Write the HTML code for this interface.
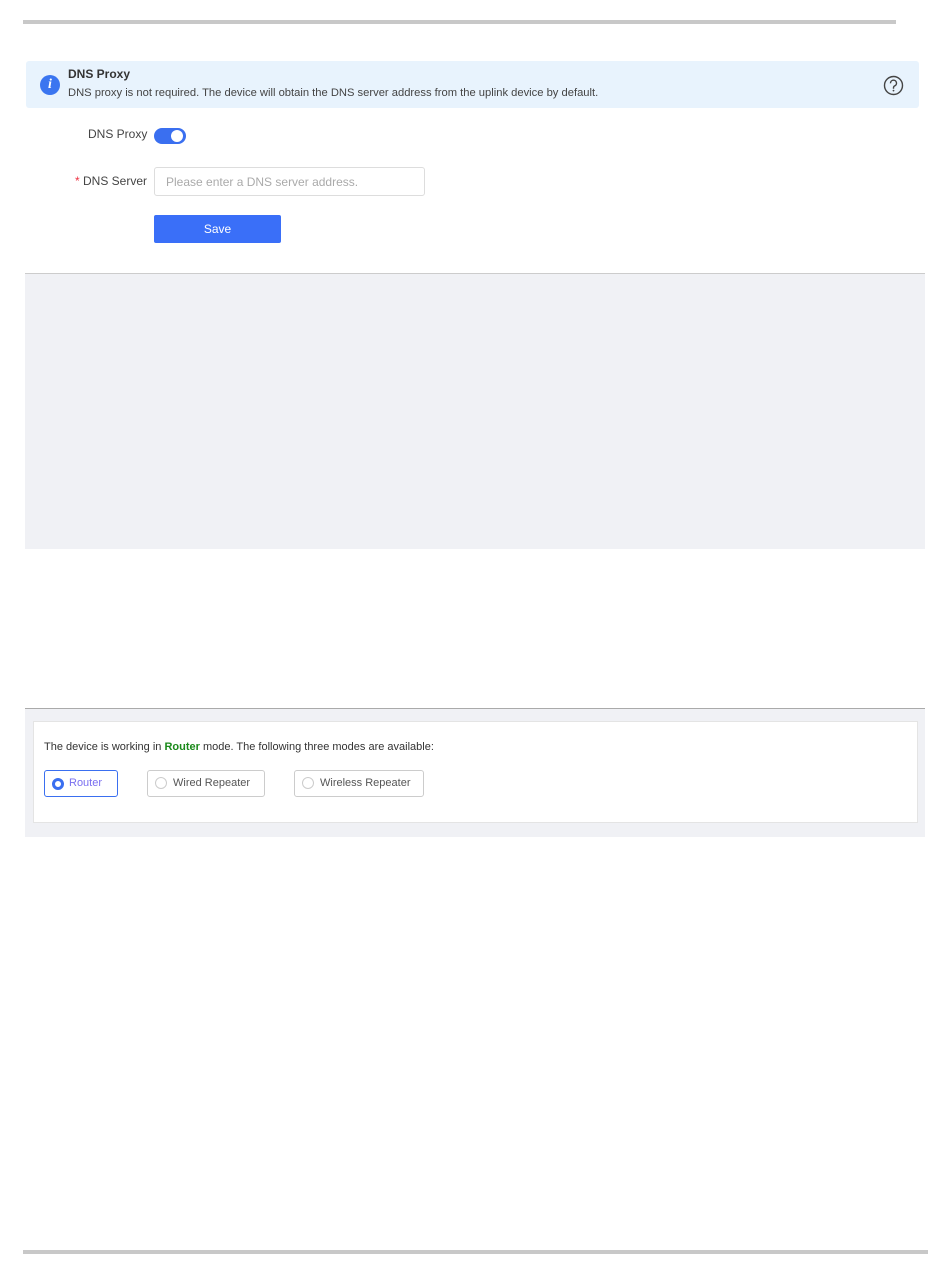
<!DOCTYPE html>
<html><head><style>
body{margin:0;width:950px;height:1276px;background:#fff;position:relative;font-family:"Liberation Sans",sans-serif;overflow:hidden}
.a{position:absolute}
</style></head><body>
<div class="a" style="left:23px;top:20px;width:873px;height:4px;background:#c8c8c8"></div>
<div class="a" style="left:26px;top:61px;width:893px;height:47px;background:#e8f3fd;border-radius:3px"></div>
<div class="a" style="left:40px;top:75px;width:20px;height:20px;border-radius:50%;background:#3a75f0;color:#fff;font:italic bold 14px 'Liberation Serif',serif;text-align:center;line-height:20px">i</div>
<div class="a" style="left:68px;top:67px;font-size:12px;font-weight:bold;color:#333">DNS Proxy</div>
<div class="a" style="left:68px;top:87px;font-size:11.2px;color:#444">DNS proxy is not required. The device will obtain the DNS server address from the uplink device by default.</div>
<svg class="a" style="left:883px;top:75px" width="21" height="21" viewBox="0 0 21 21"><circle cx="10.5" cy="10.5" r="9" fill="none" stroke="#444" stroke-width="1.4"/><path d="M7.5 8.3a3 3 0 1 1 4.2 2.6c-.9.4-1.2 1-1.2 2v.8" fill="none" stroke="#444" stroke-width="1.4"/><circle cx="10.5" cy="15.6" r=".9" fill="#444"/></svg>
<div class="a" style="left:88px;top:127px;font-size:12px;color:#444">DNS Proxy</div>
<div class="a" style="left:154px;top:128px;width:32px;height:16px;border-radius:8px;background:#3a6ff0"></div>
<div class="a" style="left:171px;top:130px;width:12px;height:12px;border-radius:50%;background:#fff"></div>
<div class="a" style="left:75px;top:174px;font-size:12px;color:#444"><span style="color:#e34">*</span> DNS Server</div>
<div class="a" style="left:154px;top:167px;width:269px;height:27px;border:1px solid #ddd;border-radius:3px"></div>
<div class="a" style="left:166px;top:175px;font-size:12px;color:#aaa">Please enter a DNS server address.</div>
<div class="a" style="left:154px;top:215px;width:127px;height:28px;background:#3a6ff8;border-radius:2px;color:#fff;font-size:12px;text-align:center;line-height:28px">Save</div>
<div class="a" style="left:25px;top:273px;width:900px;height:275px;background:#f0f1f5;border-top:1px solid #ccc"></div>
<div class="a" style="left:25px;top:708px;width:900px;height:128px;background:#f0f1f5;border-top:1px solid #aaa"></div>
<div class="a" style="left:33px;top:721px;width:883px;height:100px;background:#fff;border:1px solid #e4e4e4"></div>
<div class="a" style="left:44px;top:741px;font-size:11px;color:#333">The device is working in <b style="color:#1a8a1a">Router</b> mode. The following three modes are available:</div>
<div class="a" style="left:44px;top:770px;width:72px;height:25px;border:1px solid #3a6ff0;border-radius:3px"></div>
<div class="a" style="left:52px;top:778px;width:6px;height:6px;border-radius:50%;background:#fff;border:3px solid #3a6ff0"></div>
<div class="a" style="left:69px;top:777px;font-size:11px;color:#7a6ff0">Router</div>
<div class="a" style="left:147px;top:770px;width:116px;height:25px;border:1px solid #ccc;border-radius:3px"></div>
<div class="a" style="left:155px;top:777px;width:10px;height:10px;border-radius:50%;border:1px solid #ccc"></div>
<div class="a" style="left:173px;top:777px;font-size:11px;color:#555">Wired Repeater</div>
<div class="a" style="left:294px;top:770px;width:128px;height:25px;border:1px solid #ccc;border-radius:3px"></div>
<div class="a" style="left:302px;top:777px;width:10px;height:10px;border-radius:50%;border:1px solid #ccc"></div>
<div class="a" style="left:320px;top:777px;font-size:11px;color:#555">Wireless Repeater</div>
<div class="a" style="left:23px;top:1250px;width:905px;height:4px;background:#c8c8c8"></div>
</body></html>
